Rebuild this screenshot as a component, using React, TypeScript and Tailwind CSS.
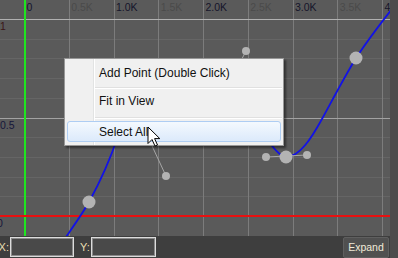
import React from 'react';

const GRID_X = [0, 1, 2, 3, 4, 5, 6, 7, 8].map(i => 24 + i * 44.75);
const X_LABELS = ['0', '0.5K', '1.0K', '1.5K', '2.0K', '2.5K', '3.0K', '3.5K', '4'];
const MINOR_Y = [1, 2, 3, 4, 6, 7, 8, 9].map(k => 19 + k * 19.7);

const CURVE =
  'M 48 264 C 66 236, 80 218, 89 202 C 100 182, 110 160, 118 136 C 135 85, 180 70, 215 100 ' +
  'C 250 100, 272 157, 286 157 C 300 157, 312 137, 322 119 C 334 97, 345 76, 356 58 C 368 40, 380 24, 396 4';

const Chart = () => (
  <svg width={390} height={236} className="block">
    <rect width={390} height={236} fill="#5a5a5a" />
    <g shapeRendering="crispEdges">
      {MINOR_Y.map(y => (
        <rect key={y} x={0} y={Math.round(y)} width={390} height={1} fill="#656565" />
      ))}
      {GRID_X.map(x => (
        <rect key={x} x={Math.round(x)} y={0} width={1} height={236} fill="#7c7c7c" />
      ))}
      <rect x={0} y={19} width={390} height={1} fill="#b0b0b0" />
      <rect x={0} y={118} width={390} height={1} fill="#a2a2a2" />
    </g>
    <g fontFamily="'Liberation Sans', Arial, sans-serif" fontSize={10.5}>
      {GRID_X.map((x, i) => (
        <text key={i} x={x + 2.5} y={10.5} fill={i % 2 === 0 ? '#15152a' : '#4a4a4a'}>
          {X_LABELS[i]}
        </text>
      ))}
      <text x={0} y={29.5} fill="#3a1616">1</text>
      <text x={0} y={129} fill="#16163a">0.5</text>
      <text x={-3} y={227} fill="#16163a">0</text>
    </g>
    <rect x={24} y={0} width={2} height={236} fill="#1fe51f" shapeRendering="crispEdges" />
    <rect x={0} y={215} width={390} height={2} fill="#e81010" shapeRendering="crispEdges" />
    <path d={CURVE} fill="none" stroke="#1212e6" strokeWidth={1.8} />
    <g stroke="#a6a6a6" strokeWidth={1}>
      <line x1={266} y1={157} x2={307} y2={155} />
      <line x1={166} y1={176} x2={140} y2={120} />
      <line x1={246} y1={51} x2={232} y2={78} />
    </g>
    <g fill="#b3b3b3">
      <circle cx={89} cy={202} r={6.5} />
      <circle cx={286} cy={157} r={6.5} />
      <circle cx={356} cy={58} r={6.5} />
      <circle cx={166} cy={176} r={4} />
      <circle cx={246} cy={51} r={4} />
      <circle cx={266} cy={157} r={4} />
      <circle cx={307} cy={155} r={4} />
    </g>
  </svg>
);

const Sep = () => <div className="ml-[28px] mr-[1px] h-[2px] border-t border-[#e0e0e0] bg-white" />;

const ContextMenu = () => (
  <div className="absolute left-[64px] top-[58px] w-[220px] h-[88px] flex flex-col bg-[#f0f0f0] border border-[#979797] shadow-[2px_2px_2px_rgba(0,0,0,0.45)] text-[12px] text-[#111]">
    <div className="absolute left-[28px] top-0 bottom-0 w-[2px] border-l border-[#e2e3e3] bg-white" />
    <div className="relative h-[28px] flex items-center pl-[34px]">Add Point (Double Click)</div>
    <Sep />
    <div className="relative h-[28px] flex items-center pl-[34px] pb-[4px]">Fit in View</div>
    <Sep />
    <div className="relative mt-[2px] mx-[2px] h-[21px] flex items-center pl-[31px] rounded-[3px] border border-[#aecdf3] bg-gradient-to-b from-[#f4f9fe] to-[#dceafb]">
      Select All
    </div>
  </div>
);

const Cursor = () => (
  <svg className="absolute left-[147px] top-[126px]" width={14} height={22} viewBox="0 0 14 22">
    <path
      d="M1 1 L1 17.5 L5 13.5 L8 20 L10.5 19 L7.6 12.6 L12.8 12.6 Z"
      fill="#fff"
      stroke="#000"
      strokeWidth={1}
      strokeLinejoin="round"
    />
  </svg>
);

export default function App() {
  return (
    <div className="flex w-[398px] h-[258px] bg-[#4c4c4c] font-['Liberation_Sans',Arial,sans-serif] overflow-hidden">
      <div className="flex flex-col w-[390px]">
        <div className="relative h-[236px] overflow-hidden">
          <Chart />
          <ContextMenu />
          <Cursor />
        </div>
        <div className="flex items-start h-[22px] pt-[1px] bg-[#3e3e3e] text-[11px] text-[#e6ddb0]">
          <span className="w-[10px] h-[20px] flex items-center justify-end pr-[1px] whitespace-nowrap">X:</span>
          <div className="w-[64px] h-[20px] bg-[#494949] border border-[#dcdcdc] shadow-[inset_0_0_0_1px_#8a8a8a]" />
          <span className="ml-[6px] h-[20px] flex items-center">Y:</span>
          <div className="ml-[1.5px] w-[65px] h-[20px] bg-[#494949] border border-[#dcdcdc] shadow-[inset_0_0_0_1px_#8a8a8a]" />
          <button className="ml-auto mr-[1px] w-[46px] h-[21px] flex items-center justify-center bg-[#505050] border border-[#5f5f5f] rounded-[2px] text-[10.5px] text-[#efead8]">
            Expand
          </button>
        </div>
      </div>
      <div className="w-[8px] bg-[#4c4c4c]" />
    </div>
  );
}
